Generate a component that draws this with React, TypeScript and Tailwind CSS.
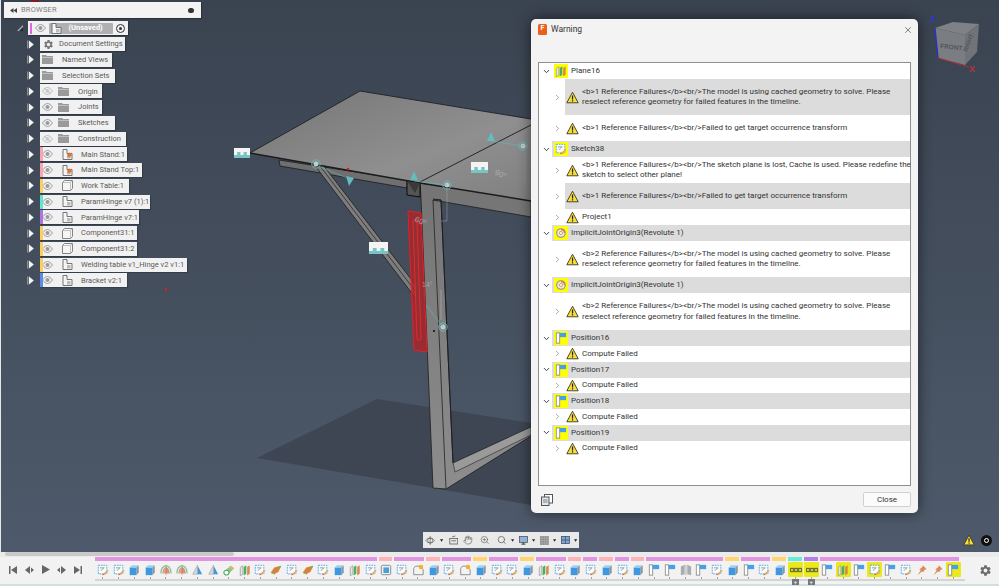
import React from "react";
import { Hand, ZoomIn, Search, ChevronDown, ChevronRight, X } from "lucide-react";
import { MdSettings } from "react-icons/md";

const W = 15.75;

function Warn({ size = 13 }: { size?: number }) {
  return (
    <svg width={size} height={size} viewBox="0 0 16 16" className="shrink-0">
      <path d="M8 1.500 15 14.500H1Z" fill="#f7df3a" stroke="#3a3520" strokeWidth="1.100" strokeLinejoin="round" />
      <rect x="7.300" y="5.500" width="1.500" height="5" fill="#222" />
      <rect x="7.300" y="11.300" width="1.500" height="1.600" fill="#222" />
    </svg>
  );
}

function IconSketch() {
  return (
    <svg width="14" height="14" viewBox="0 0 14 14">
      <rect x="1.500" y="1.500" width="10" height="10" fill="#f6fbff" stroke="#4b9fdc" strokeWidth="1" strokeDasharray="2 1" />
      <path d="M3.500 4.500h5M8 4.500 4.500 8" stroke="#777" strokeWidth="0.800" fill="none" />
      <path d="M6.500 12 12.500 7l1 1L8 13Z" fill="#f2a23c" />
      <path d="M6 13l1-1.500 1 1Z" fill="#d33" />
    </svg>
  );
}
function IconBox() {
  return (
    <svg width="14" height="14" viewBox="0 0 14 14">
      <path d="M2 4v9h8V4Z" fill="#3f97e0" />
      <path d="M2 4 4.500 1.500h8L10 4Z" fill="#9fd0f2" />
      <path d="M10 4 12.500 1.500v8L10 13Z" fill="#8d949c" />
    </svg>
  );
}
function IconRevolve() {
  return (
    <svg width="14" height="14" viewBox="0 0 14 14">
      <path d="M1 11C1 5 4 2 7 2s6 3 6 9" fill="none" stroke="#7ab98a" strokeWidth="1.200" />
      <path d="M2.500 11C3 6 5 3.500 7 3.500V11Z" fill="#e6a184" />
      <path d="M7 3.500c2 0 4 2.500 4.500 7.500H7Z" fill="#d98f72" />
      <path d="M7 1v12" stroke="#888" strokeWidth="0.700" />
    </svg>
  );
}
function IconCone() {
  return (
    <svg width="14" height="14" viewBox="0 0 14 14">
      <path d="M7.500 1.500 13 12H7.500Z" fill="#3f97e0" />
      <path d="M7.500 1.500 2 12h5.500Z" fill="#cfd6dc" stroke="#8a8f95" strokeWidth="0.500" />
    </svg>
  );
}
function IconPipe() {
  return (
    <svg width="14" height="14" viewBox="0 0 14 14">
      <path d="M2 8 9 2l4 3-7 7Z" fill="#8ac48c" />
      <path d="M9 2l4 3-2 2-4-3Z" fill="#e2b36c" />
      <ellipse cx="4" cy="10" rx="3" ry="2.800" fill="#fff" stroke="#3eab57" strokeWidth="1.200" />
    </svg>
  );
}
function IconPlane() {
  return (
    <svg width="14" height="14" viewBox="0 0 14 14">
      <path d="M1.500 4 4.500 2v10l-3 1.500Z" fill="#e6e6e6" stroke="#8a8a8a" strokeWidth="0.700" />
      <path d="M5.500 3.500 8.500 1.500v10l-3 2Z" fill="#48b05e" />
      <path d="M9.500 3.500 12.500 1.500v10l-3 2Z" fill="#d98a4e" />
    </svg>
  );
}
function IconPatch() {
  return (
    <svg width="14" height="14" viewBox="0 0 14 14">
      <path d="M1 10 5 4l8-2-3 7-5 3Z" fill="#d9803c" />
      <path d="M9 3l4-1-1 3Z" fill="#6fb37c" />
      <path d="M1 10l4 2" stroke="#7bbb85" strokeWidth="1" />
    </svg>
  );
}
function IconDerive() {
  return (
    <svg width="14" height="14" viewBox="0 0 14 14">
      <rect x="1.500" y="1.500" width="11" height="11" rx="1.500" fill="#eee" stroke="#7e7e7e" />
      <rect x="4" y="4" width="6.500" height="6.500" fill="#4a9fdd" />
    </svg>
  );
}
function IconPoly() {
  return (
    <svg width="14" height="14" viewBox="0 0 14 14">
      <path d="M4 2.500h6l3 4v6H2V5Z" fill="#f3f3f3" stroke="#777" strokeWidth="0.900" />
      <circle cx="10.500" cy="3.500" r="2.600" fill="#f6b02c" />
    </svg>
  );
}
function IconPosition() {
  return (
    <svg width="14" height="14" viewBox="0 0 14 14">
      <rect x="1.500" y="1" width="4" height="12" fill="#fff" stroke="#8a8a8a" />
      <rect x="5.500" y="1" width="7.500" height="5" fill="#45a0e6" />
    </svg>
  );
}
function IconMirror() {
  return (
    <svg width="14" height="14" viewBox="0 0 14 14">
      <path d="M1 3 5.500 1v11L1 13Z" fill="#a9adb1" />
      <path d="M13 3 8.500 1v11l4.500 1Z" fill="#a9adb1" />
      <path d="M7 1v12" stroke="#777" strokeWidth="0.600" />
    </svg>
  );
}
function IconGroup() {
  return (
    <svg width="14" height="14" viewBox="0 0 14 14">
      <rect x="0.800" y="5" width="3" height="4" fill="none" stroke="#444" />
      <rect x="5.500" y="5" width="3" height="4" fill="none" stroke="#444" />
      <rect x="10.200" y="5" width="3" height="4" fill="none" stroke="#444" />
    </svg>
  );
}
function IconPin() {
  return (
    <svg width="14" height="14" viewBox="0 0 14 14">
      <path d="M8 1.500 12.500 6 10.500 6.500 8 10 7 8.500 2 13 5.500 7 4 6 7.500 3.500Z" fill="#dd8a58" />
    </svg>
  );
}
function IconJoint() {
  return (
    <svg width="14" height="14" viewBox="0 0 14 14">
      <circle cx="7" cy="7" r="5" fill="#e8e8e8" stroke="#8b8b8b" strokeWidth="1.200" />
      <path d="M7 3a4 4 0 0 1 4 4" stroke="#d97a35" strokeWidth="1.400" fill="none" />
      <circle cx="7" cy="7" r="1.800" fill="#fff" stroke="#e0902a" />
    </svg>
  );
}

const icons: Record<string, () => React.ReactElement> = {
  s: IconSketch, b: IconBox, r: IconRevolve, c: IconCone, t: IconPipe, p: IconPlane, o: IconPatch,
  d: IconDerive, g: IconPoly, P: IconPosition, m: IconMirror, G: IconGroup, n: IconPin,
};

const seq = "s s b b r r c c t p s o s o s b p s d s g b s g b s s b p s b s b s b P P m P s b P s b G G P p P s P s n n P".split(" ");
const hi = new Set([44, 45, 47, 49, 54]);
const bars: [string, number][] = [
  ["#e293e2", 18], ["#ffb3b8", 1], ["#e293e2", 2], ["#ffb3b8", 1], ["#e293e2", 2], ["#ffd56e", 1], ["#e293e2", 2], ["#ffd56e", 1],
  ["#e293e2", 2], ["#ffb3b8", 1], ["#e293e2", 1], ["#ffb3b8", 1], ["#e293e2", 1], ["#ffb3b8", 1], ["#e293e2", 5], ["#ffd56e", 1],
  ["#e293e2", 2], ["#ffd56e", 1], ["#66ecd6", 1], ["#b37ee6", 1], ["#e293e2", 9],
];

function Eye({ off }: { off?: boolean }) {
  return (
    <svg width="11" height="8" viewBox="0 0 22 16">
      <path d="M1 8c4-5 7-7 10-7s6 2 10 7c-4 5-7 7-10 7S5 13 1 8Z" fill="none" stroke={off ? "#bbb" : "#999"} strokeWidth="2" />
      <circle cx="11" cy="8" r="4" fill={off ? "#ccc" : "#999"} />
      {off && <path d="M4 2 18 14" stroke="#bbb" strokeWidth="1.500" />}
    </svg>
  );
}
function Folder() {
  return (
    <svg width="11" height="9" viewBox="0 0 11 9">
      <path d="M0 0h4l1 1h6v8H0Z" fill="#9a9a9a" />
      <rect x="0" y="2" width="11" height="0.700" fill="#d0d0d0" />
    </svg>
  );
}
function Comp({ kind }: { kind: string }) {
  return (
    <svg width="13" height="13" viewBox="0 0 13 13">
      {kind === "box" ? (
        <>
          <path d="M1.500 3.500 3.500 1.500h8v8L9.500 11.500h-8Z" fill="#f5f5f5" stroke="#777" strokeWidth="0.900" />
          <path d="M1.500 3.500h8v8M9.500 3.500l2-2" fill="none" stroke="#aaa" strokeWidth="0.700" />
        </>
      ) : (
        <>
          <path d="M2 11.500V1.500h4v4h5v6Z" fill="#f5f5f5" stroke="#666" strokeWidth="0.900" />
          <rect x="6" y="7" width="3.500" height="3.500" fill="#bbb" />
          {kind === "star" && <path d="M8 4l1 1.500L11 4.500 10 6.500l1.500 1-2 .5-.5 2-1-1.500-2 .5 1-2L5.500 6l2-.2Z" fill="#e8702a" />}
        </>
      )}
    </svg>
  );
}

type Tree = { l: string; w: number; eye?: "on" | "off"; ic: string; a?: string };
const tree: Tree[] = [
  { l: "Document Settings", w: 85, ic: "gear" },
  { l: "Named Views", w: 72, ic: "folder" },
  { l: "Selection Sets", w: 75, ic: "folder" },
  { l: "Origin", w: 62, eye: "off", ic: "folder" },
  { l: "Joints", w: 62, eye: "on", ic: "folder" },
  { l: "Sketches", w: 75, eye: "on", ic: "folder" },
  { l: "Construction", w: 86, eye: "off", ic: "folder" },
  { l: "Main Stand:1", w: 87, eye: "on", ic: "star", a: "bg-[#f7a6ae]" },
  { l: "Main Stand Top:1", w: 102, eye: "on", ic: "star", a: "bg-[#f7a6ae]" },
  { l: "Work Table:1", w: 89, eye: "on", ic: "box", a: "bg-[#fbd060]" },
  { l: "ParamHinge v7 (1):1", w: 110, eye: "on", ic: "hinge", a: "bg-[#5fe8cd]" },
  { l: "ParamHinge v7:1", w: 99, eye: "on", ic: "hinge", a: "bg-[#ad74e2]" },
  { l: "Component31:1", w: 97, eye: "on", ic: "box", a: "bg-[#fbd060]" },
  { l: "Component31:2", w: 97, eye: "on", ic: "box", a: "bg-[#fbd060]" },
  { l: "Welding table v1_Hinge v2 v1:1", w: 147, eye: "on", ic: "hinge", a: "bg-[#fbd060]" },
  { l: "Bracket v2:1", w: 87, eye: "on", ic: "hinge", a: "bg-[#5a8de8]" },
];

function Expand() {
  return (
    <svg width="7" height="9" viewBox="0 0 7 9" className="shrink-0">
      <rect x="0" y="0.500" width="1.500" height="8" fill="#8a8f96" />
      <path d="M2 0.500 6.800 4.500 2 8.500Z" fill="#f4f4f4" />
    </svg>
  );
}

function TreeRow({ t }: { t: Tree }) {
  const comp = t.ic === "star" || t.ic === "box" || t.ic === "hinge";
  return (
    <div className="flex h-[15.750px] items-center">
      <div className="ml-[23px] mr-[6px]"><Expand /></div>
      <div
        className="relative flex h-[14px] items-center bg-[#f1f1f1] pl-[2px] shadow-[1px_1px_1px_rgba(0,0,0,0.2)]"
        style={{ width: t.w }}
      >
        {t.a && <div className={`absolute left-0 top-0 h-full w-[3px] ${t.a}`} />}
        {t.eye && <div className="mr-[5px] flex w-[11px] justify-center"><Eye off={t.eye === "off"} /></div>}
        {t.ic === "gear" && <div className="ml-[1px]"><MdSettings size={11} color="#777" /></div>}
        {t.ic === "folder" && <Folder />}
        {comp && <div className="ml-[3px]"><Comp kind={t.ic} /></div>}
        <span className={`whitespace-nowrap text-[7.500px] leading-none text-[#5a5a5a] ${comp ? "ml-[7px]" : t.ic === "gear" ? "ml-[5px]" : "ml-[9px]"}`}>
          {t.l}
        </span>
      </div>
    </div>
  );
}

function Browser() {
  return (
    <div className="absolute left-[4px] top-[2px] w-[197px]">
      <div className="flex h-[16px] items-center bg-[#f3f3f3] pl-[6px] pr-[7px] shadow-[1px_1px_1px_rgba(0,0,0,0.25)]">
        <svg width="7" height="5" viewBox="0 0 7 5"><path d="M3.500 0v5L0 2.500ZM7 0v5L3.500 2.500Z" fill="#444" /></svg>
        <span className="ml-[4px] text-[7.500px] tracking-[0.2px] text-[#808080]">BROWSER</span>
        <div className="ml-auto h-[5px] w-[6px] rounded-full bg-[#333]" />
      </div>
      <div className="mt-[2px] flex h-[16px] items-center">
        <svg width="6" height="6" viewBox="0 0 6 6" className="ml-[13px] mr-[5px]"><path d="M6 0v6H0Z" fill="#aab0b8" /><path d="M6 2v4H2Z" fill="#23282e" /></svg>
        <div className="flex h-[14px] w-[100px] items-center bg-[#f1f1f1] shadow-[1px_1px_1px_rgba(0,0,0,0.25)]">
          <div className="ml-[2px] h-[11px] w-[1.500px] bg-[#e264e2]" />
          <div className="ml-[3px]"><Eye /></div>
          <div className="ml-[3px] flex h-[11px] w-[64px] items-center rounded-[1px] bg-[#b0b0b0]">
            <div className="ml-[1px]"><Comp kind="hinge" /></div>
            <span className="ml-[6px] text-[7.500px] font-bold leading-none text-white">(Unsaved)</span>
          </div>
          <div className="ml-[3px] flex h-[9px] w-[9px] items-center justify-center rounded-full border border-[#333]">
            <div className="h-[3px] w-[3px] rounded-full bg-[#333]" />
          </div>
        </div>
      </div>
      <div className="pt-[0.250px]">
        {tree.map((t) => <TreeRow key={t.l} t={t} />)}
      </div>
    </div>
  );
}

function Scene() {
  return (
    <svg width="999" height="552" viewBox="0 0 999 552" className="absolute left-0 top-0">
      <defs>
        <linearGradient id="top" x1="0" y1="0" x2="1" y2="1">
          <stop offset="0" stopColor="#757575" />
          <stop offset="0.600" stopColor="#8f8f8f" />
          <stop offset="1" stopColor="#808080" />
        </linearGradient>
        <linearGradient id="leg" x1="0" y1="0" x2="0" y2="1">
          <stop offset="0" stopColor="#747474" />
          <stop offset="1" stopColor="#8d8d8d" />
        </linearGradient>
      </defs>
      <rect x="31" y="0" width="8" height="2" fill="#7d1f1f" />
      <path d="M257 458 377 399 531 423V505L433 488Z" fill="#3e4653" />
      <path d="M279 160 280 166 407 188V180Z" fill="#6f6f6f" stroke="#1c1c1c" strokeWidth="0.800" />
      <path d="M316 167 323 165 421 292 417 300Z" fill="#7d7d7d" stroke="#1e1e1e" strokeWidth="0.800" />
      <path d="M320 166 419 296" stroke="#2a2a2a" strokeWidth="0.800" />
      <path d="M420 183 531 200V217L433 200 441 200 453 463 531 427V436L446 489 433 488 421 198Z" fill="url(#leg)" stroke="#1e1e1e" strokeWidth="0.800" />
      <path d="M433 199 441 200 453 463" fill="none" stroke="#1e1e1e" strokeWidth="0.900" />
      <path d="M433 200 446 489" stroke="#222" strokeWidth="0.800" />
      <path d="M453 463 531 427 531 435 455 472Z" fill="#9a9a9a" stroke="#222" strokeWidth="0.600" />
      <path d="M250 153 360 91 531 119V201L420 183Z" fill="url(#top)" />
      <path d="M250 153 360 91 531 119" fill="none" stroke="#1e2126" strokeWidth="0.900" />
      <path d="M250 153 420 183 531 201" fill="none" stroke="#1b1b1b" strokeWidth="1.500" />
      <path d="M420 182 531 125" stroke="#1b1b1b" strokeWidth="0.900" />
      <path d="M407 181 420 183V197L407 195Z" fill="#555" stroke="#0c0c0c" strokeWidth="1" />
      <path d="M407 181 415 193 420 183" fill="#3a3a3a" />
      <path d="M408 211 421 213 427 352 414 350Z" fill="#a8262b" fillOpacity="0.850" stroke="#ea1c24" strokeWidth="1" />
      <path d="M413 222a2 2 0 0 1 4 0L421 338a2 2 0 0 1-4 0Z" fill="#8f3034" stroke="#ee2a2a" strokeWidth="0.900" />
      {[[316, 164], [447, 185], [523, 146], [443, 327]].map(([x, y]) => (
        <g key={x}>
          <circle cx={x} cy={y} r="4.200" fill="none" stroke="#62b9bd" strokeWidth="1" />
          <circle cx={x} cy={y} r="2.500" fill="#c9c9c9" />
        </g>
      ))}
      <path d="M320 167 352 180M414 181 447 185M491 141 523 146M426 305 443 327" stroke="#62b9bd" strokeWidth="0.600" fill="none" />
      <path d="M346 176 354 178 349 186Z" fill="#66bcbc" />
      <path d="M414 171 418 180 410 180Z" fill="#66bcbc" />
      <path d="M491 132 495 141 487 141Z" fill="#66bcbc" />
      <path d="M447 190V221H441" stroke="#aab2bc" strokeWidth="0.600" fill="none" opacity="0.700" />
      <path d="M525 152V183" stroke="#aab2bc" strokeWidth="0.500" fill="none" opacity="0.500" />
      <path d="M441 290V320" stroke="#bbb" strokeWidth="1" fill="none" opacity="0.500" />
      <circle cx="434" cy="331" r="1.100" fill="#111" />
      <circle cx="348" cy="169" r="1.200" fill="#e11" />
      <rect x="165" y="288" width="2" height="3" fill="#d81e1e" />
      <text x="414" y="221" fontSize="8" fill="#aeb6c0" opacity="0.800" transform="rotate(25 414 221)" fontFamily="Liberation Sans">60°</text>
      <text x="494" y="174" fontSize="8" fill="#b5b5b5" opacity="0.800" transform="rotate(25 494 174)" fontFamily="Liberation Sans">90°</text>
      <text x="422" y="287" fontSize="7" fill="#b5b5b5" opacity="0.700" fontFamily="Liberation Sans">14°</text>
      {[[234, 148, 16, 10], [369, 242, 19, 12], [471, 162, 17, 11]].map(([x, y, w, h]) => (
        <g key={x}>
          <rect x={x} y={y} width={w} height={h} fill="#f4f4f4" />
          <path d={`M${x} ${y + h}V${y + h - 3}h${w * 0.2}v-3h${w * 0.2}v3h${w * 0.2}v-3h${w * 0.2}v3h${w * 0.2}v3Z`} fill="#78c4c2" />
        </g>
      ))}
      <path d="M935 28 953 22 979 24 965 35Z" fill="#7e8186" />
      <path d="M935 28 965 35 965 65 938 58Z" fill="#7a7d82" />
      <path d="M965 35 979 24 977 52 965 65Z" fill="#707378" />
      <text x="940" y="48" fontSize="6.500" fontWeight="700" fill="#55575b" transform="rotate(6 940 48)" fontFamily="Liberation Sans">FRONT</text>
      <text x="967" y="52" fontSize="6" fontWeight="700" fill="#55575b" transform="rotate(-70 967 52)" fontFamily="Liberation Sans">RIGHT</text>
      <path d="M935 28 938 58" stroke="#2232c8" strokeWidth="1.300" />
      <path d="M938 58 969 67" stroke="#a83038" strokeWidth="1.300" />
      <text x="930" y="22" fontSize="9" fontWeight="700" fill="#2a3bc8" fontFamily="Liberation Sans">Z</text>
      <text x="969" y="72" fontSize="9" fontWeight="700" fill="#b8333f" fontFamily="Liberation Sans">X</text>
    </svg>
  );
}

function Head({ ic, label, plain }: { ic: React.ReactNode; label: string; plain?: boolean }) {
  return (
    <div className="flex h-[16px] items-center">
      <div className="flex w-[13px] shrink-0 justify-center pl-[1px]"><ChevronDown size={9} strokeWidth={2.500} color="#333" /></div>
      <div className={`flex h-full flex-1 items-center pl-[2px] ${plain ? "" : "bg-[#dcdcdc]"}`}>
        <div className="flex h-[14px] w-[14px] items-center justify-center bg-[#ffff00] [&_svg]:size-[12px]">{ic}</div>
        <span className="ml-[3px] text-[8px] text-[#333]">{label}</span>
      </div>
    </div>
  );
}
function Row({ lines, h, grey }: { lines: string[]; h: string; grey?: boolean }) {
  return (
    <div className={`flex items-center ${h}`}>
      <div className="flex w-[26px] shrink-0 justify-end pr-[3px]"><ChevronRight size={9} strokeWidth={2} color="#888" /></div>
      <div className={`flex h-full min-w-0 flex-1 items-center pl-[1px] ${grey ? "bg-[#dcdcdc]" : ""}`}>
        <Warn />
        <div className="ml-[3px] whitespace-nowrap text-[8px] leading-[10.500px] text-[#333]">
          {lines.map((l) => <div key={l}>{l}</div>)}
        </div>
      </div>
    </div>
  );
}

const cached = (n: number) => [
  `<b>${n} Reference Failures</b><br/>The model is using cached geometry to solve. Please`,
  "reselect reference geometry for failed features in the timeline.",
];
const occ = ["<b>1 Reference Failures</b><br/>Failed to get target occurrence transform"];

function Dialog() {
  return (
    <div className="absolute left-[531px] top-[19px] flex h-[494px] w-[387px] flex-col rounded-[5px] bg-[#f3f3f3] shadow-[0_0_14px_rgba(0,0,0,0.55)]">
      <div className="flex h-[21px] items-center pl-[7px] pr-[5px]">
        <div className="flex h-[11px] w-[9px] items-start justify-center rounded-[1.500px] bg-[#e8601c] text-[7px] font-bold leading-[9px] text-white">F</div>
        <span className="ml-[4px] text-[8.500px] text-[#333]">Warning</span>
        <X size={10} strokeWidth={1.300} color="#222" className="ml-auto" />
      </div>
      <div className="mx-[7px] mt-[22px] h-[424px] border border-[#8f8f8f] bg-white">
        <Head plain label="Plane16" ic={<IconPlane />} />
        <Row grey h="h-[36px]" lines={cached(1)} />
        <Row h="h-[26px]" lines={occ} />
        <Head label="Sketch38" ic={<IconSketch />} />
        <Row h="h-[26px]" lines={["<b>1 Reference Failures</b><br/>The sketch plane is lost, Cache is used. Please redefine the", "sketch to select other plane!"]} />
        <Row grey h="h-[26px]" lines={occ} />
        <Row h="h-[16px]" lines={["Project1"]} />
        <Head label="ImplicitJointOrigin3(Revolute 1)" ic={<IconJoint />} />
        <Row h="h-[36px]" lines={cached(2)} />
        <Head label="ImplicitJointOrigin3(Revolute 1)" ic={<IconJoint />} />
        <Row h="h-[37px]" lines={cached(2)} />
        {[16, 17, 18, 19].map((n) => (
          <React.Fragment key={n}>
            <Head label={`Position${n}`} ic={<IconPosition />} />
            <Row h="h-[15.500px]" lines={["Compute Failed"]} />
          </React.Fragment>
        ))}
      </div>
      <div className="flex flex-1 items-center justify-between pl-[10px] pr-[7px]">
        <svg width="12" height="12" viewBox="0 0 12 12">
          <rect x="3.500" y="0.500" width="8" height="8.500" fill="#fff" stroke="#555" />
          <rect x="0.500" y="3" width="7.500" height="8.500" fill="#dfe6ec" stroke="#555" />
          <path d="M2 6h4.500M2 8h4.500" stroke="#555" strokeWidth="0.700" />
        </svg>
        <div className="flex h-[15px] w-[48px] items-center justify-center rounded-[2px] border border-[#d0d0d0] bg-[#fbfbfb] text-[8px] text-[#333]">Close</div>
      </div>
    </div>
  );
}

function Caret() {
  return <svg width="4" height="3" viewBox="0 0 4 3" className="mx-[1.500px]"><path d="M0 0h4L2 3Z" fill="#222" /></svg>;
}

function Toolbar() {
  return (
    <div className="absolute left-[423px] top-[532px] flex h-[16px] w-[156px] items-center gap-[3px] bg-[#e9e9e9] pl-[2px]">
      <svg width="13" height="13" viewBox="0 0 14 14" fill="none" stroke="#5a5a5a" strokeWidth="0.900">
        <circle cx="7" cy="7" r="3.500" />
        <path d="M1 7c2-2.500 4-3 6-3s4 .5 6 3c-2 2.500-4 3-6 3S3 9.500 1 7ZM7 1v12" />
      </svg>
      <Caret />
      <svg width="12" height="12" viewBox="0 0 12 12" fill="none" stroke="#5a5a5a" className="ml-[1px]"><rect x="1" y="4" width="10" height="7" /><path d="M3 7h6M4 2l4-1" /></svg>
      <Hand size={12} strokeWidth={1.400} color="#555" className="ml-[2px]" />
      <ZoomIn size={12} strokeWidth={1.400} color="#555" className="ml-[4px]" />
      <Search size={12} strokeWidth={2} color="#666" className="ml-[5px]" />
      <Caret />
      <svg width="11" height="11" viewBox="0 0 11 11"><rect x="0.500" y="0.500" width="10" height="7.500" fill="#8fb4dc" stroke="#555" /><path d="M3 10h5M5.500 8v2" stroke="#555" strokeWidth="1.500" /></svg>
      <Caret />
      <svg width="11" height="11" viewBox="0 0 11 11"><rect width="11" height="11" fill="#8c8c8c" /><path d="M2.500 0v11M5.500 0v11M8.500 0v11M0 2.500h11M0 5.500h11M0 8.500h11" stroke="#c4c4c4" strokeWidth="0.500" /></svg>
      <Caret />
      <svg width="11" height="10" viewBox="0 0 11 10"><rect x="0.500" y="0.500" width="10" height="9" fill="#7fa6cf" stroke="#41566c" /><path d="M5.500 0v10M0 5h11" stroke="#41566c" /></svg>
      <Caret />
    </div>
  );
}

function Timeline() {
  return (
    <div className="flex h-[34px] shrink-0 flex-col bg-[#f2f2f2]">
      <div className="h-[5px] bg-[#ebebeb] pl-[5px]"><div className="h-[4px] w-[229px] rounded-[2px] bg-[#c9c9c9]" /></div>
      <div className="flex flex-1">
        <div className="flex w-[97px] items-center pb-[2px] pl-[9px]">
          <svg width="8" height="8" viewBox="0 0 8 8"><path d="M0 0h1.500v8H0ZM8 0v8L2 4Z" fill="#666" /></svg>
          <svg width="9" height="8" viewBox="0 0 9 8" className="ml-[8px]"><path d="M5 0v8L0 4ZM6 1.500 9 4 6 6.500Z" fill="#666" /></svg>
          <svg width="8" height="9" viewBox="0 0 8 9" className="ml-[8px]"><path d="M0 0 8 4.500 0 9Z" fill="#666" /></svg>
          <svg width="9" height="8" viewBox="0 0 9 8" className="ml-[7px]"><path d="M3 1.500 0 4 3 6.500ZM4 0v8L9 4Z" fill="#666" /></svg>
          <svg width="8" height="8" viewBox="0 0 8 8" className="ml-[8px]"><path d="M8 0H6.500v8H8ZM0 0v8L6 4Z" fill="#666" /></svg>
        </div>
        <div className="relative -ml-[2px] flex-1">
          <div className="flex h-[4px]">
            {bars.map(([c, n], i) => (
              <div key={i} className="mr-[2px] h-[4px]" style={{ width: n * W - 2, backgroundColor: c }} />
            ))}
          </div>
          <div className="mt-[1px] flex">
            {seq.map((k, i) => {
              const Ic = icons[k];
              return (
                <div key={i} className="relative flex w-[15.750px] shrink-0 flex-col items-center">
                  <div className={`flex h-[15px] w-[15px] items-center justify-center rounded-[1px] [&_svg]:size-[12px] ${hi.has(i) ? "bg-[#e9e91e]" : ""}`}>
                    <Ic />
                  </div>
                  <div className="h-[2px] w-px bg-[#a8a8a8]" />
                  {k === "G" && (
                    <div className="absolute left-[4px] top-[17px] flex h-[6px] w-[7px] items-center justify-center bg-[#777] text-[6px] leading-none text-white">+</div>
                  )}
                </div>
              );
            })}
          </div>
          <div className="h-[2px] w-[870px] bg-[#d4d4d4]" />
          <div className="absolute right-[7px] top-[7px]"><MdSettings size={13} color="#6a6a6a" /></div>
        </div>
      </div>
      <div className="h-[2px] bg-[#cfe1dd]" />
    </div>
  );
}

export default function App() {
  return (
    <div className="flex h-[586px] w-[999px] flex-col overflow-hidden" style={{ fontFamily: '"Roboto", "Liberation Sans", sans-serif' }}>
      <div className="relative flex-1 bg-gradient-to-b from-[#3a4350] to-[#4e5a6b] shadow-[inset_1px_0_0_#e6e6e6]">
        <Scene />
        <Browser />
        <Dialog />
        <Toolbar />
        <div className="absolute left-[963px] top-[534px]"><Warn size={12} /></div>
        <div className="absolute left-[981px] top-[535px] flex h-[11px] w-[11px] items-center justify-center rounded-full bg-[#111]">
          <div className="h-[5px] w-[5px] rounded-full border border-white" />
        </div>
      </div>
      <Timeline />
    </div>
  );
}
